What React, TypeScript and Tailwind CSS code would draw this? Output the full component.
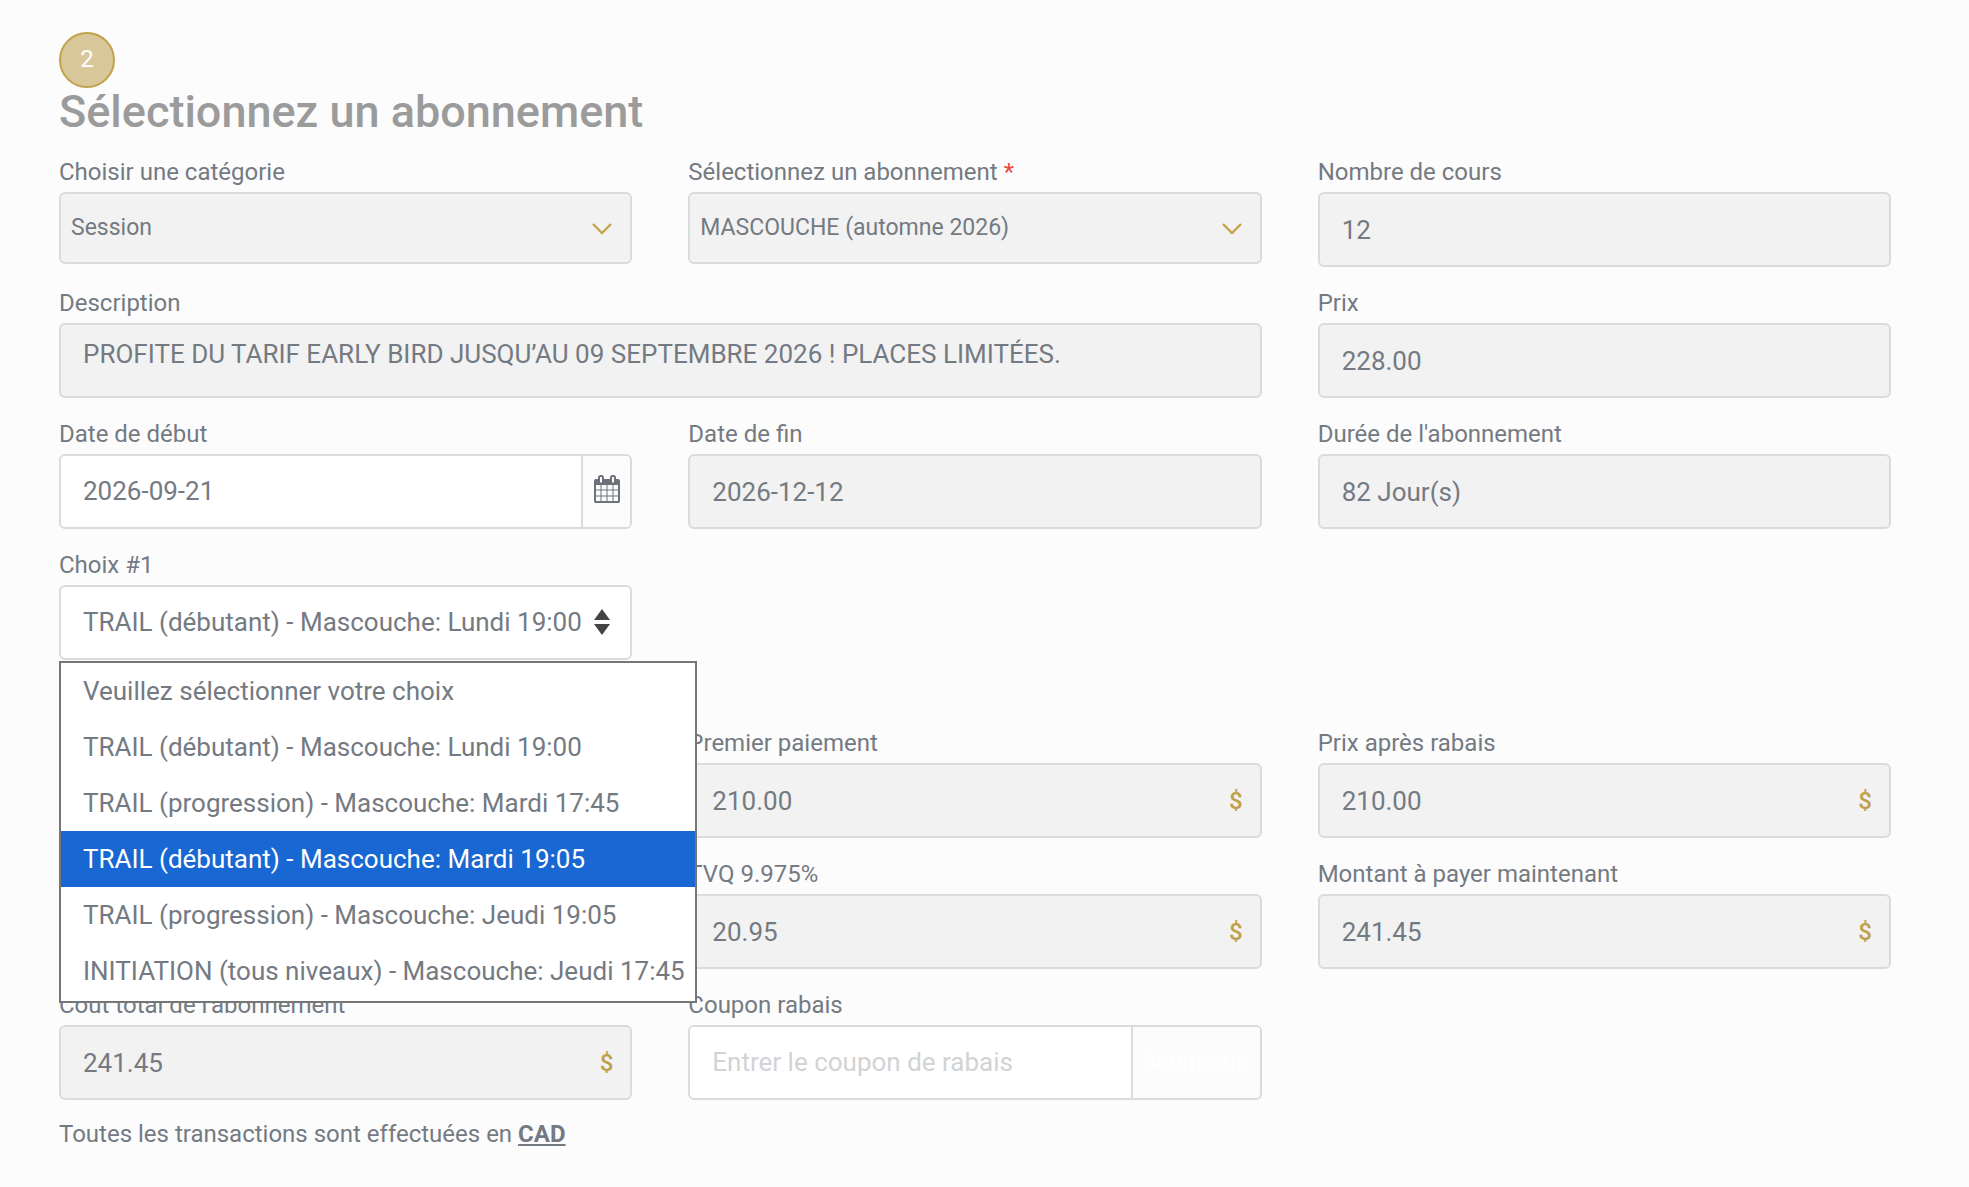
import { useState } from "react";

const choices = [
  "Veuillez sélectionner votre choix",
  "TRAIL (débutant) - Mascouche: Lundi 19:00",
  "TRAIL (progression) - Mascouche: Mardi 17:45",
  "TRAIL (débutant) - Mascouche: Mardi 19:05",
  "TRAIL (progression) - Mascouche: Jeudi 19:05",
  "INITIATION (tous niveaux) - Mascouche: Jeudi 17:45",
];

const labelClass = "block h-9 text-2xl leading-8 whitespace-nowrap";
const boxClass = "flex h-[75px] overflow-hidden rounded-md border-2 border-[#dadbdb]";

function CalendarIcon() {
  return (
    <svg viewBox="0 0 1664 1792" className="h-7 w-[26px]" fill="currentColor" aria-hidden="true">
      <path d="M128 1664h288v-288h-288v288zm352 0h320v-288h-320v288zm-352-352h288v-320h-288v320zm352 0h320v-320h-320v320zm-352-384h288v-288h-288v288zm736 736h320v-288h-320v288zm-384-736h320v-288h-320v288zm768 736h288v-288h-288v288zm-384-352h320v-320h-320v320zm-352-864v-288q0-13-9.5-22.5t-22.5-9.5h-64q-13 0-22.5 9.5t-9.5 22.5v288q0 13 9.5 22.5t22.5 9.5h64q13 0 22.5-9.5t9.5-22.5zm736 864h288v-320h-288v320zm-384-384h320v-288h-320v288zm384 0h288v-288h-288v288zm32-480v-288q0-13-9.5-22.5t-22.5-9.5h-64q-13 0-22.5 9.5t-9.5 22.5v288q0 13 9.5 22.5t22.5 9.5h64q13 0 22.5-9.5t9.5-22.5zm384-64v1280q0 52-38 90t-90 38h-1408q-52 0-90-38t-38-90v-1280q0-52 38-90t90-38h128v-96q0-66 47-113t113-47h64q66 0 113 47t47 113v96h384v-96q0-66 47-113t113-47h64q66 0 113 47t47 113v96h128q52 0 90 38t38 90z" />
    </svg>
  );
}

function SelectField({ id, label, value, required }: { id: string; label: string; value: string; required?: boolean }) {
  return (
    <div>
      <label htmlFor={id} className={labelClass}>
        {label}
        {required && <span className="text-[#f04444]"> *</span>}
      </label>
      <div className="relative">
        <select
          id={id}
          disabled
          className="h-[72px] w-full appearance-none rounded-md border-2 border-[#dadbdb] bg-[#f2f2f2] pr-12 pl-[10px] text-[23px] opacity-100"
        >
          <option>{value}</option>
        </select>
        <svg
          viewBox="0 0 20 12"
          className="pointer-events-none absolute top-[31px] right-5 h-3 w-5 text-[#c7a34a]"
          fill="none"
          stroke="currentColor"
          strokeWidth="2.4"
          aria-hidden="true"
        >
          <path d="M1 1l9 9 9-9" />
        </svg>
      </div>
    </div>
  );
}

type ReadOnlyFieldProps = {
  id: string;
  label: string;
  value: string;
  money?: boolean;
  className?: string;
};

function ReadOnlyField({ id, label, value, money, className }: ReadOnlyFieldProps) {
  return (
    <div className={className}>
      <label htmlFor={id} className={labelClass}>
        {label}
      </label>
      <div className={`${boxClass} items-center bg-[#f2f2f2]`}>
        <input id={id} value={value} readOnly className="h-full min-w-0 flex-1 pl-[22px] text-[26px] outline-none" />
        {money && <span className="pr-[17px] text-2xl font-medium text-[#c0a04a]">$</span>}
      </div>
    </div>
  );
}

export default function App() {
  const [choice, setChoice] = useState(1);
  const [hovered, setHovered] = useState(3);
  const [open, setOpen] = useState(true);
  const [startDate, setStartDate] = useState("2026-09-21");
  const [coupon, setCoupon] = useState("");

  const pick = (index: number) => {
    setChoice(index);
    setOpen(false);
  };

  return (
    <main className="min-h-screen bg-[#fcfcfc] pt-8 pr-[78px] pb-9 pl-[59px] font-[Roboto,sans-serif] text-[#747a82]">
      <div className="flex size-14 items-center justify-center rounded-full border-2 border-[#c2a14a] bg-[#d7c799] pb-0.5 text-2xl text-white">
        2
      </div>
      <h1 className="mb-5 text-[45px] leading-12 font-medium text-[#9b9b9b]">Sélectionnez un abonnement</h1>

      <form onSubmit={(e) => e.preventDefault()}>
        <div className="grid grid-cols-3 gap-x-14 gap-y-5">
          <SelectField id="category" label="Choisir une catégorie" value="Session" />
          <SelectField id="membership" label="Sélectionnez un abonnement" value="MASCOUCHE (automne 2026)" required />
          <ReadOnlyField id="classes" label="Nombre de cours" value="12" />

          <div className="col-span-2">
            <label htmlFor="description" className={labelClass}>
              Description
            </label>
            <textarea
              id="description"
              readOnly
              rows={1}
              value="PROFITE DU TARIF EARLY BIRD JUSQU’AU 09 SEPTEMBRE 2026 ! PLACES LIMITÉES."
              className="block h-[75px] w-full resize-none overflow-hidden rounded-md border-2 border-[#dadbdb] bg-[#f2f2f2] px-[22px] py-3 text-[26px] leading-[34px] outline-none"
            />
          </div>
          <ReadOnlyField id="price" label="Prix" value="228.00" />

          <div>
            <label htmlFor="start" className={labelClass}>
              Date de début
            </label>
            <div className={`${boxClass} bg-white`}>
              <input
                id="start"
                value={startDate}
                onChange={(e) => setStartDate(e.target.value)}
                className="min-w-0 flex-1 pl-[22px] text-[26px] outline-none"
              />
              <button
                type="button"
                aria-label="Ouvrir le calendrier"
                className="flex w-[49px] items-center justify-center border-l-2 border-[#dadbdb] bg-[#fcfcfc] pb-1.5 text-[#6c727a]"
              >
                <CalendarIcon />
              </button>
            </div>
          </div>
          <ReadOnlyField id="end" label="Date de fin" value="2026-12-12" />
          <ReadOnlyField id="duration" label="Durée de l'abonnement" value="82 Jour(s)" />

          <div>
            <label htmlFor="choice" className={labelClass}>
              Choix #1
            </label>
            <div className="relative">
              <select
                id="choice"
                value={choice}
                onChange={(e) => setChoice(Number(e.target.value))}
                className="block h-[75px] w-full appearance-none rounded-md border-2 border-[#dadbdb] bg-white pr-11 pl-[22px] text-[26px] outline-none"
              >
                {choices.map((c, i) => (
                  <option key={c} value={i}>
                    {c}
                  </option>
                ))}
              </select>
              <svg
                viewBox="0 0 16 26"
                className="pointer-events-none absolute top-6 right-[22px] h-[26px] w-4"
                fill="#444"
                aria-hidden="true"
              >
                <path d="M8 0l8 11H0zM0 15h16L8 26z" />
              </svg>
              {open && (
                <ul
                  role="listbox"
                  aria-label="Choix #1"
                  className="absolute top-full left-0 z-10 mt-px w-max border-2 border-[#767676] bg-white pb-0.5 text-[26px]"
                >
                  {choices.map((c, i) => (
                    <li
                      key={c}
                      role="option"
                      aria-selected={i === hovered}
                      onMouseEnter={() => setHovered(i)}
                      onClick={() => pick(i)}
                      className={`h-14 pr-2.5 pl-[22px] leading-14 whitespace-nowrap ${
                        i === hovered ? "bg-[#1967d2] text-white" : ""
                      }`}
                    >
                      {c}
                    </li>
                  ))}
                </ul>
              )}
            </div>
          </div>
        </div>

        <div className="mt-[67px] grid grid-cols-3 gap-x-14 gap-y-5">
          <ReadOnlyField id="first" label="Premier paiement" value="210.00" money className="col-start-2" />
          <ReadOnlyField id="discounted" label="Prix après rabais" value="210.00" money />

          <ReadOnlyField id="tvq" label="TVQ 9.975%" value="20.95" money className="col-start-2" />
          <ReadOnlyField id="due" label="Montant à payer maintenant" value="241.45" money />

          <ReadOnlyField id="cost" label="Coût total de l'abonnement" value="241.45" money />
          <div>
            <label htmlFor="coupon" className={labelClass}>
              Coupon rabais
            </label>
            <div className={`${boxClass} bg-white`}>
              <input
                id="coupon"
                value={coupon}
                onChange={(e) => setCoupon(e.target.value)}
                placeholder="Entrer le coupon de rabais"
                className="min-w-0 flex-1 pl-[22px] text-[26px] outline-none placeholder:text-[#d2d3d4]"
              />
              <button type="submit" className="w-[129px] border-l-2 border-[#dadbdb] bg-[#fcfcfc] text-[23px] text-white">
                Soumettre
              </button>
            </div>
          </div>
        </div>

        <p className="mt-[18px] text-2xl leading-8">
          Toutes les transactions sont effectuées en{" "}
          <a href="#cad" className="font-bold underline">
            CAD
          </a>
        </p>
      </form>
    </main>
  );
}
